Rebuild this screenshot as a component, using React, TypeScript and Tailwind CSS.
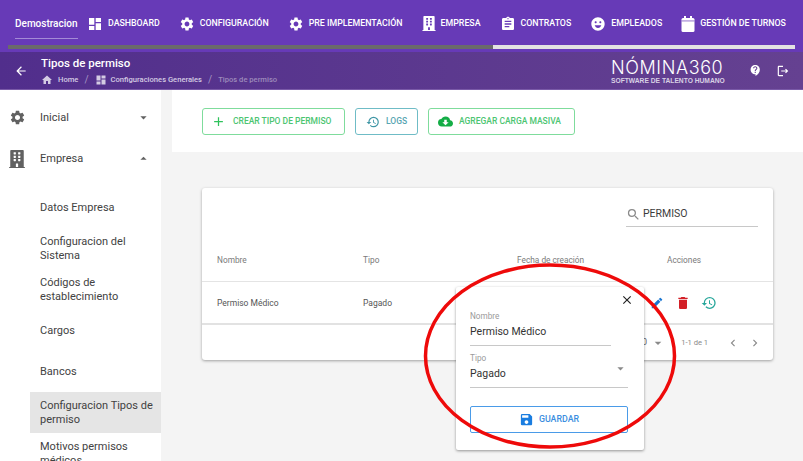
import type { ReactNode } from 'react';
import {
  MdAdd,
  MdArrowBack,
  MdArrowDropDown,
  MdArrowDropUp,
  MdAssignment,
  MdChevronLeft,
  MdChevronRight,
  MdClose,
  MdCloudDownload,
  MdContactSupport,
  MdDashboard,
  MdDelete,
  MdEdit,
  MdEmojiEmotions,
  MdHome,
  MdOutlineLogout,
  MdRestore,
  MdSave,
  MdSearch,
  MdSettings,
} from 'react-icons/md';
import { FaBuilding } from 'react-icons/fa';

function CalendarIcon() {
  return (
    <svg viewBox="0 0 14 16" className="w-[14px] h-[16px]" fill="currentColor">
      <rect x="0.5" y="2" width="13" height="14" rx="1.5" />
      <rect x="3" y="0" width="2" height="3" />
      <rect x="9" y="0" width="2" height="3" />
      <rect x="0.5" y="4.6" width="13" height="0.7" fill="#673ab7" />
    </svg>
  );
}

const navItems = [
  { label: 'DASHBOARD', icon: <MdDashboard className="w-[16px] h-[16px]" /> },
  { label: 'CONFIGURACIÓN', icon: <MdSettings className="w-[16px] h-[16px]" /> },
  { label: 'PRE IMPLEMENTACIÓN', icon: <MdSettings className="w-[16px] h-[16px]" /> },
  { label: 'EMPRESA', icon: <FaBuilding className="w-[14px] h-[15px]" /> },
  { label: 'CONTRATOS', icon: <MdAssignment className="w-[16px] h-[16px]" /> },
  { label: 'EMPLEADOS', icon: <MdEmojiEmotions className="w-[16px] h-[16px]" /> },
  { label: 'GESTIÓN DE TURNOS', icon: <CalendarIcon /> },
];

const subItems = [
  { label: 'Datos Empresa' },
  { label: 'Configuracion del Sistema' },
  { label: 'Códigos de establecimiento' },
  { label: 'Cargos' },
  { label: 'Bancos' },
  { label: 'Configuracion Tipos de permiso', active: true },
  { label: 'Motivos permisos médicos' },
];

function OutlineButton({ children, className }: { children: ReactNode; className: string }) {
  return (
    <button className={`h-[27px] flex items-center border rounded-[3px] text-[8.5px] font-medium whitespace-nowrap ${className}`}>
      {children}
    </button>
  );
}

export default function App() {
  return (
    <div className="relative w-[803px] h-[461px] overflow-hidden bg-[#f4f4f4] font-['Roboto',sans-serif]">
      {/* Top nav */}
      <div className="h-[52px] bg-[#673ab7] text-white">
        <div className="h-[45px] flex items-start pl-[15px]">
          <div className="h-[39px] w-[63px] border-b border-[#a48ad6] flex items-center pt-[8px] text-[10px] font-medium whitespace-nowrap mr-[9px]">
            Demostracion
          </div>
          <div className="flex items-center h-[45px] mt-[1px] gap-[19px]">
            {navItems.map((item) => (
              <div key={item.label} className="flex items-center gap-[5px] text-[8.8px] font-medium whitespace-nowrap">
                {item.icon}
                <span>{item.label}</span>
              </div>
            ))}
          </div>
        </div>
        <div className="flex h-[4px] pl-[8px]">
          <div className="w-[485px] bg-[#6a6a6a]" />
          <div className="w-[302px] bg-[#e2e2e2]" />
        </div>
      </div>

      {/* Page header */}
      <div className="h-[38px] bg-gradient-to-r from-[#512e8c] to-[#654191] border-b border-[#7a5aa8] flex items-center text-white">
        <MdArrowBack className="w-[14px] h-[14px] ml-[14px] mr-[13px] mt-[1px]" />
        <div className="flex flex-col">
          <div className="text-[11.5px] font-medium leading-[15px]">Tipos de permiso</div>
          <div className="flex items-center text-[7.6px] font-medium leading-[12px] text-[#d4cbe3] mt-[3px]">
            <MdHome className="w-[12px] h-[12px] mr-[5px]" />
            <span>Home</span>
            <span className="mx-[6px] text-[#a695c4] text-[10px] font-normal">/</span>
            <MdDashboard className="w-[12px] h-[12px] mr-[4px]" />
            <span>Configuraciones Generales</span>
            <span className="mx-[6px] text-[#a695c4] text-[10px] font-normal">/</span>
            <span className="text-[#9d8bbb]">Tipos de permiso</span>
          </div>
        </div>
        <div className="ml-auto flex flex-col items-start mr-[24px] w-[114px] mt-[1px]">
          <div className="text-[18px] leading-[18px] font-['Inter',sans-serif] font-light tracking-[0.6px] whitespace-nowrap">
            NÓMINA360
          </div>
          <div className="text-[6.7px] leading-[7px] font-['Liberation_Sans',sans-serif] font-bold text-[#d8d0e4] whitespace-nowrap">
            SOFTWARE DE TALENTO HUMANO
          </div>
        </div>
        <MdContactSupport className="w-[13px] h-[13px] mr-[14px]" />
        <MdOutlineLogout className="w-[14px] h-[14px] mr-[13px]" />
      </div>

      <div className="flex">
        {/* Sidebar */}
        <aside className="w-[161px] h-[371px] bg-white pt-[7px] text-[11px] leading-[14px] text-[#424242] shrink-0">
          <div className="h-[41px] flex items-center">
            <MdSettings className="w-[17px] h-[17px] ml-[9px] mr-[14px] text-[#616161]" />
            <span>Inicial</span>
            <MdArrowDropDown className="w-[15px] h-[15px] ml-auto mr-[10px] text-[#616161]" />
          </div>
          <div className="h-[41px] flex items-center">
            <FaBuilding className="w-[16px] h-[18px] ml-[9px] mr-[15px] text-[#616161]" />
            <span>Empresa</span>
            <MdArrowDropUp className="w-[15px] h-[15px] ml-auto mr-[10px] text-[#616161]" />
          </div>
          <div className="mt-[8px]">
            {subItems.map((item) => (
              <div
                key={item.label}
                className={`h-[41px] ml-[30px] pl-[10px] pr-[4px] flex items-center ${item.active ? 'bg-[#e5e5e5]' : ''}`}
              >
                {item.label}
              </div>
            ))}
          </div>
        </aside>

        <main className="flex-1">
          {/* Actions */}
          <div className="ml-[11px] h-[62px] bg-white flex items-center pt-[1px] pl-[30px] gap-[10px]">
            <OutlineButton className="w-[143px] border-[#7fdc9c] text-[#4cc571] pl-[8px] gap-[7px]">
              <MdAdd className="w-[15px] h-[15px] text-[#2fc25c]" />
              CREAR TIPO DE PERMISO
            </OutlineButton>
            <OutlineButton className="w-[63px] border-[#6fbcc6] text-[#57a5b2] pl-[10px] gap-[6px]">
              <MdRestore className="w-[14px] h-[14px] text-[#3f96a5]" />
              LOGS
            </OutlineButton>
            <OutlineButton className="w-[147px] border-[#7fdc9c] text-[#4cc571] pl-[9px] gap-[6px]">
              <MdCloudDownload className="w-[15px] h-[15px] text-[#14ad46]" />
              AGREGAR CARGA MASIVA
            </OutlineButton>
          </div>

          {/* Table card */}
          <div className="ml-[41px] mt-[36px] w-[571px] h-[172px] bg-white rounded-[3px] shadow-[0_1px_3px_rgba(0,0,0,0.35)]">
            <div className="h-[58px] flex justify-end items-start pr-[15px] pt-[14px]">
              <div className="w-[132px] h-[25px] border-b border-[#c8c8c8] flex items-center">
                <MdSearch className="w-[15px] h-[15px] text-[#8a8a8a] mr-[2px]" />
                <span className="text-[10.5px] text-[#3c3c3c]">PERMISO</span>
              </div>
            </div>
            <div className="h-[36px] flex items-center pl-[15px] pb-[6px] text-[8.3px] text-[#7a7a7a] border-b border-[#e4e4e4]">
              <span className="w-[146px]">Nombre</span>
              <span className="w-[154px]">Tipo</span>
              <span className="w-[150px]">Fecha de creación</span>
              <span>Acciones</span>
            </div>
            <div className="h-[43px] flex items-center pl-[15px] pt-[1px] text-[8.5px] text-[#555] border-b-2 border-[#e2e2e2]">
              <span className="w-[146px]">Permiso Médico</span>
              <span className="w-[287px]">Pagado</span>
              <MdEdit className="w-[14px] h-[14px] text-[#1976d2]" />
              <MdDelete className="w-[16px] h-[16px] ml-[11px] text-[#d32027]" />
              <MdRestore className="w-[16px] h-[16px] ml-[10px] text-[#26a69a]" />
            </div>
            <div className="h-[35px] flex items-center pl-[435px] text-[7.6px] text-[#8a8a8a]">
              <span className="text-[#666] text-[9px]">10</span>
              <MdArrowDropDown className="w-[16px] h-[16px] ml-[3px]" />
              <span className="ml-[15px]">1-1 de 1</span>
              <MdChevronLeft className="w-[14px] h-[14px] ml-[18px]" />
              <MdChevronRight className="w-[14px] h-[14px] ml-[8px]" />
            </div>
          </div>
        </main>
      </div>

      {/* Popover */}
      <div className="absolute left-[456px] top-[287px] w-[188px] h-[163px] bg-white rounded-[2px] shadow-[0_1px_3px_rgba(0,0,0,0.4)] pl-[14px] pr-[16px]">
        <MdClose className="absolute right-[10px] top-[6px] w-[14px] h-[14px] text-[#222]" />
        <div className="pt-[24px] w-[141px] h-[59px] border-b border-[#c8c8c8]">
          <div className="text-[8.2px] leading-[11px] text-[#9a9a9a]">Nombre</div>
          <div className="text-[10.5px] leading-[14px] mt-[3px] text-[#333]">Permiso Médico</div>
        </div>
        <div className="pt-[7px] h-[42px] border-b border-[#c8c8c8] relative">
          <div className="text-[8.2px] leading-[11px] text-[#9a9a9a]">Tipo</div>
          <div className="text-[10.5px] leading-[14px] mt-[3px] text-[#333]">Pagado</div>
          <MdArrowDropDown className="absolute right-0 top-[15px] w-[15px] h-[15px] text-[#8a8a8a]" />
        </div>
        <button className="mt-[18px] w-full h-[27px] flex items-center justify-center gap-[5px] border border-[#4a9be8] rounded-[2px] text-[8.8px] font-medium text-[#3b8ee0]">
          <MdSave className="w-[15px] h-[15px] text-[#1a7de0]" />
          GUARDAR
        </button>
      </div>

      {/* Red annotation */}
      <svg className="absolute left-0 top-0 pointer-events-none" width="803" height="461" viewBox="0 0 803 461">
        <ellipse cx="550" cy="356" rx="124.5" ry="91" fill="none" stroke="#ee0a0a" strokeWidth="3.5" />
      </svg>
    </div>
  );
}
